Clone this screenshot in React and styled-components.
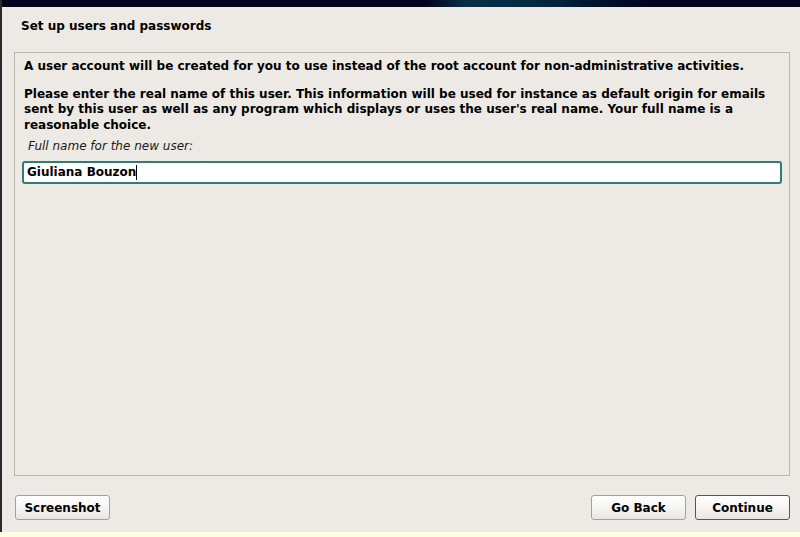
import React from "react";
import styled, { createGlobalStyle } from "styled-components";

const GlobalStyle = createGlobalStyle`
  html, body {
    margin: 0;
    padding: 0;
    width: 800px;
    height: 537px;
    overflow: hidden;
    background: #edeae5;
  }
  * {
    box-sizing: border-box;
  }
`;

const App = () => {
  return (
    <>
      <GlobalStyle />
      <Window>
        <Banner />
        <Body>
          <Title>Set up users and passwords</Title>
          <Panel>
            <Paragraph>
              A user account will be created for you to use instead of the root
              account for non-administrative activities.
            </Paragraph>
            <Paragraph>
              Please enter the real name of this user. This information will be
              used for instance as default origin for emails sent by this user
              as well as any program which displays or uses the user's real
              name. Your full name is a reasonable choice.
            </Paragraph>
            <FieldLabel>Full name for the new user:</FieldLabel>
            <InputBox>
              <InputText>Giuliana Bouzon</InputText>
              <Caret />
            </InputBox>
          </Panel>
          <ButtonRow>
            <Button>Screenshot</Button>
            <Spacer />
            <Button>Go Back</Button>
            <Button $primary>Continue</Button>
          </ButtonRow>
        </Body>
        <StatusStrip />
      </Window>
    </>
  );
};

export default App;

const Window = styled.div`
  width: 800px;
  height: 537px;
  display: flex;
  flex-direction: column;
  background: #edeae5;
  border-left: 2px solid #2a2a2a;
  font-family: "DejaVu Sans", "Liberation Sans", sans-serif;
  color: #000;
`;

const Banner = styled.div`
  height: 7px;
  flex: none;
  background: linear-gradient(
    90deg,
    #02021f 0%,
    #02021f 53%,
    #053046 58%,
    #062a40 66%,
    #03223a 70%,
    #02142e 74%,
    #02021f 82%,
    #02021f 100%
  );
`;

const Body = styled.div`
  flex: 1;
  display: flex;
  flex-direction: column;
  padding: 0 10px 0 12px;
`;

const Title = styled.h1`
  margin: 0;
  padding: 12px 0 0 7px;
  height: 45px;
  font-size: 12px;
  font-weight: bold;
  line-height: 15px;
`;

const Panel = styled.div`
  height: 424px;
  border: 1px solid #bfb6aa;
  padding: 6px 8px 0 9px;
  display: flex;
  flex-direction: column;
`;

const Paragraph = styled.p`
  margin: 0 0 12px;
  font-size: 12px;
  font-weight: bold;
  line-height: 15.5px;
`;

const FieldLabel = styled.div`
  margin: -6px 0 0 4px;
  font-size: 12px;
  font-style: italic;
  line-height: 15px;
  color: #1a1a1a;
`;

const InputBox = styled.div`
  margin: 7px 0 0 -2px;
  width: 760px;
  height: 23px;
  border: 2px solid #2f7d78;
  border-radius: 3px;
  background: #fff;
  display: flex;
  align-items: center;
  padding-left: 3px;
`;

const InputText = styled.span`
  font-size: 12px;
  font-weight: bold;
  line-height: 15px;
`;

const Caret = styled.span`
  width: 1px;
  height: 15px;
  background: #000;
`;

const ButtonRow = styled.div`
  display: flex;
  align-items: center;
  gap: 9px;
  padding: 19px 0 0 1px;
`;

const Spacer = styled.div`
  flex: 1;
`;

const Button = styled.button`
  width: 95px;
  height: 25px;
  padding: 0;
  border: 1px solid ${(p) => (p.$primary ? "#5a5550" : "#a8a096")};
  border-radius: 3px;
  background: linear-gradient(#ffffff, #f4f2ef 60%, #e9e6e1);
  font-family: "DejaVu Sans", "Liberation Sans", sans-serif;
  font-size: 12px;
  font-weight: bold;
  color: #000;
`;

const StatusStrip = styled.div`
  height: 5px;
  flex: none;
  margin-left: -2px;
  background: #fffce6;
`;
